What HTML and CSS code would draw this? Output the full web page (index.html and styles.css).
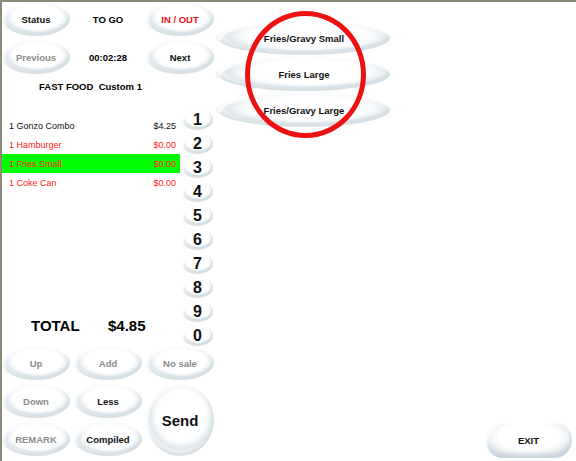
FILE: index.html
```html
<!DOCTYPE html>
<html lang="en">
<head>
    <meta charset="UTF-8">
    <title>POS Order</title>
    <link rel="stylesheet" href="styles.css">
</head>
<body>
    <div class="screen">
        <div class="left">
            <div class="head-grid">
                <button class="oval">Status</button>
                <span class="label">TO GO</span>
                <button class="oval red">IN / OUT</button>
                <button class="oval off">Previous</button>
                <span class="label">00:02:28</span>
                <button class="oval">Next</button>
            </div>
            <div class="title">FAST FOOD&nbsp; Custom 1</div>
            <div class="middle">
                <div class="order">
                    <div class="row"><span>1 Gonzo Combo</span><span>$4.25</span></div>
                    <div class="row red"><span>1 Hamburger</span><span>$0.00</span></div>
                    <div class="row red selected"><span>1 Fries Small</span><span>$0.00</span></div>
                    <div class="row red"><span>1 Coke Can</span><span>$0.00</span></div>
                    <div class="total"><span class="total-label">TOTAL</span><span>$4.85</span></div>
                </div>
                <div class="keys">
                    <button class="oval key">1</button>
                    <button class="oval key">2</button>
                    <button class="oval key">3</button>
                    <button class="oval key">4</button>
                    <button class="oval key">5</button>
                    <button class="oval key">6</button>
                    <button class="oval key">7</button>
                    <button class="oval key">8</button>
                    <button class="oval key">9</button>
                    <button class="oval key">0</button>
                </div>
            </div>
            <div class="foot-grid">
                <button class="oval off">Up</button>
                <button class="oval off">Add</button>
                <button class="oval off">No sale</button>
                <button class="oval off">Down</button>
                <button class="oval">Less</button>
                <button class="oval send">Send</button>
                <button class="oval off">REMARK</button>
                <button class="oval">Compiled</button>
            </div>
        </div>
        <div class="right">
            <button class="oval wide">Fries/Gravy Small</button>
            <button class="oval wide">Fries Large</button>
            <button class="oval wide">Fries/Gravy Large</button>
            <div class="ring"></div>
            <button class="exit">EXIT</button>
        </div>
    </div>
</body>
</html>
```

FILE: styles.css
```css
body {
    margin: 0;
    font-family: "Liberation Sans", Arial, sans-serif;
    background: #fff;
}
.screen {
    width: 576px;
    height: 461px;
    box-sizing: border-box;
    border-top: 2px solid #8b8b7a;
    border-left: 2px solid #8b8b7a;
    display: flex;
    overflow: hidden;
}
.left {
    width: 214px;
    display: flex;
    flex-direction: column;
}
/* glossy oval buttons */
.oval {
    border: none;
    padding: 0;
    border-radius: 50%;
    background: radial-gradient(ellipse 50% 50% at 52% 44%, #fff 68%, #f4f7f9 80%, #e1e8ec 92%, #eef2f4 100%);
    box-shadow: inset 2px 2px 2px rgba(255, 255, 255, 0.9), inset -1px -3px 3px rgba(170, 185, 196, 0.35);
    font-family: inherit;
    font-size: 9.5px;
    font-weight: bold;
    color: #111;
    cursor: pointer;
}
.oval.off {
    color: #8c8c8c;
}
.oval.red {
    color: #f01010;
}
.head-grid {
    display: grid;
    grid-template-columns: 68px 68px 68px;
    grid-auto-rows: 34px;
    gap: 4px;
}
.label {
    display: flex;
    align-items: center;
    justify-content: center;
    font-size: 9.5px;
    font-weight: bold;
}
.title {
    height: 36px;
    box-sizing: border-box;
    padding: 8px 0 0 37px;
    line-height: 10px;
    font-size: 9.5px;
    font-weight: bold;
}
.middle {
    display: flex;
    height: 236px;
}
.order {
    width: 178px;
    display: flex;
    flex-direction: column;
    padding-top: 6px;
    padding-bottom: 10px;
    box-sizing: border-box;
}
.row {
    height: 19px;
    display: flex;
    align-items: center;
    justify-content: space-between;
    padding: 0 4px 0 7px;
    font-size: 9px;
    color: #111;
}
.row.red {
    color: #ff2020;
}
.row.selected {
    background: #00ff00;
}
.total {
    margin-top: auto;
    padding-left: 29px;
    line-height: 20px;
    font-size: 15px;
    font-weight: bold;
}
.total-label {
    display: inline-block;
    width: 77px;
}
.keys {
    width: 36px;
    display: flex;
    flex-direction: column;
    gap: 4px;
}
.key {
    width: 31px;
    height: 20px;
    margin-left: 2px;
    font-size: 16px;
    line-height: 20px;
}
.foot-grid {
    display: grid;
    grid-template-columns: 68px 68px 68px;
    grid-auto-rows: 34px;
    gap: 4px;
}
.send {
    grid-column: 3;
    grid-row: 2 / span 2;
    font-size: 15px;
}
.right {
    flex: 1;
    position: relative;
    display: flex;
    flex-direction: column;
    gap: 2px;
    padding: 19px 0 0 2px;
}
.wide {
    width: 172px;
    height: 34px;
    box-shadow: inset 2px 2px 2px rgba(255, 255, 255, 0.9), inset -1px -3px 3px rgba(170, 185, 196, 0.35), -6px 0 0 -3px #f0f3f5;
}
.ring {
    position: absolute;
    left: 29px;
    top: 9px;
    width: 121px;
    height: 127px;
    box-sizing: border-box;
    border: 5px solid #ee1111;
    border-radius: 50%;
}
.exit {
    margin-top: auto;
    margin-right: 4px;
    margin-bottom: 3px;
    align-self: flex-end;
    width: 87px;
    height: 36px;
    border: none;
    border-radius: 18px;
    background: radial-gradient(ellipse 55% 60% at 50% 40%, #fff 62%, #f1f4f6 80%, #dde4e9 100%);
    box-shadow: inset 2px 2px 2px #fff, inset -1px -4px 4px rgba(170, 185, 196, 0.4);
    font-family: inherit;
    font-size: 9.5px;
    font-weight: bold;
    color: #111;
}
```
